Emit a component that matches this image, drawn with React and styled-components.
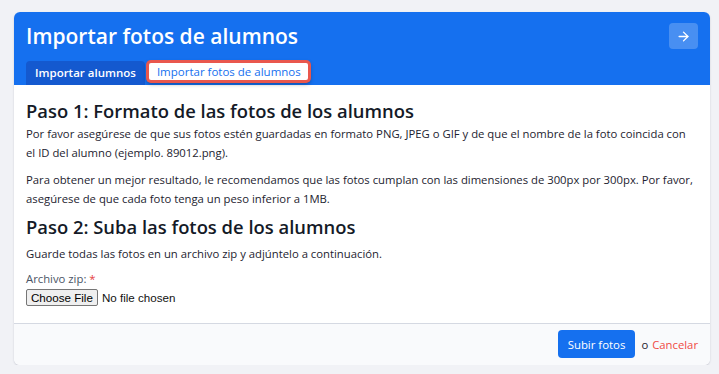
import React from "react";
import styled, { createGlobalStyle } from "styled-components";
import { ArrowRight } from "lucide-react";

const GlobalStyle = createGlobalStyle`
  body {
    margin: 0;
    background: #f1f2f6;
    font-family: "Open Sans", "Liberation Sans", sans-serif;
  }
`;

// non-breaking space keeps "el ID" together, as in the original wrap
const formatText =
  "Por favor asegúrese de que sus fotos estén guardadas en formato PNG, JPEG o GIF y de que el nombre de la foto coincida con el\u00a0ID del alumno (ejemplo. 89012.png).";

function App() {
  return (
    <>
      <GlobalStyle />
      <Page>
        <Card>
          <Header>
            <TitleRow>
              <Title>Importar fotos de alumnos</Title>
              <IconButton>
                <ArrowRight size={15} strokeWidth={2.2} />
              </IconButton>
            </TitleRow>
            <Tabs>
              <Tab>Importar alumnos</Tab>
              <Tab active>Importar fotos de alumnos</Tab>
            </Tabs>
          </Header>

          <Body>
            <Heading>Paso 1: Formato de las fotos de los alumnos</Heading>
            <Text>{formatText}</Text>
            <Text>
              Para obtener un mejor resultado, le recomendamos que las fotos cumplan con las dimensiones de
              300px por 300px. Por favor, asegúrese de que cada foto tenga un peso inferior a 1MB.
            </Text>

            <Heading second>Paso 2: Suba las fotos de los alumnos</Heading>
            <Text>Guarde todas las fotos en un archivo zip y adjúntelo a continuación.</Text>

            <Field>
              <Label>
                Archivo zip: <Required>*</Required>
              </Label>
              <FileInput type="file" accept=".zip" />
            </Field>
          </Body>

          <Footer>
            <SubmitButton>Subir fotos</SubmitButton>
            <Or>o</Or>
            <CancelLink href="#">Cancelar</CancelLink>
          </Footer>
        </Card>
      </Page>
    </>
  );
}

const Page = styled.div`
  padding: 12px 9px 0 14px;
`;

const Card = styled.div`
  background: #fff;
  border-radius: 6px;
  overflow: hidden;
  box-shadow: 0 1px 2px rgba(20, 30, 60, 0.18);
`;

const Header = styled.div`
  background: #1570ef;
  padding: 11px 12px 0 12px;
`;

const TitleRow = styled.div`
  display: flex;
  align-items: center;
  justify-content: space-between;
  height: 26px;
`;

const Title = styled.h1`
  margin: 0;
  color: #fff;
  font-size: 21px;
  font-weight: 600;
  line-height: 26px;
`;

const IconButton = styled.button`
  width: 29px;
  height: 26px;
  border: 0;
  border-radius: 4px;
  background: rgba(255, 255, 255, 0.22);
  color: #fff;
  display: flex;
  align-items: center;
  justify-content: center;
  padding: 0;
`;

const Tabs = styled.div`
  display: flex;
  align-items: flex-start;
  gap: 4px;
  margin-top: 12px;
`;

const Tab = styled.div`
  font-size: 11.5px;
  white-space: nowrap;
  ${(p) =>
    p.active
      ? `
    margin-top: 2px;
    background: #fff;
    color: #1570ef;
    font-weight: 500;
    line-height: 17px;
    padding: 0 7px 0 8px;
    border-radius: 2px;
    box-shadow: 0 0 0 3px #e9574d, 0 2px 4px 2px rgba(0, 0, 0, 0.35);
  `
      : `
    background: #1459cf;
    color: #fff;
    font-weight: 600;
    line-height: 24px;
    padding: 0 9px;
    border-radius: 4px 4px 0 0;
  `}
`;

const Body = styled.div`
  padding: 15px 12px 17px 12px;
  color: #1d2330;
`;

const Heading = styled.h2`
  margin: ${(p) => (p.second ? "7px 0 6px 0" : "0 0 2px 0")};
  font-size: 18.4px;
  font-weight: 600;
  line-height: 22px;
  color: #141a27;
`;

const Text = styled.p`
  margin: 0 0 8px 0;
  font-size: 11.3px;
  line-height: 19px;
`;

const Field = styled.div`
  display: flex;
  flex-direction: column;
  align-items: flex-start;
  gap: 1px;
  margin-top: -2px;
`;

const Label = styled.label`
  font-size: 11.3px;
  line-height: 19px;
  color: #4a5566;
`;

const Required = styled.span`
  color: #e53e3e;
`;

const FileInput = styled.input`
  font-family: "Liberation Sans", Arial, sans-serif;
  font-size: 11.6px;
  color: #111;

  &::file-selector-button {
    font-family: "Liberation Sans", Arial, sans-serif;
    font-size: 11.6px;
    background: #efefef;
    border: 1px solid #767676;
    border-radius: 2px;
    padding: 1px 4px;
    margin-right: 4px;
  }
`;

const Footer = styled.div`
  display: flex;
  justify-content: flex-end;
  align-items: center;
  gap: 6px;
  padding: 6px 12px 7px 12px;
  background: #f9fafc;
  border-top: 1px solid #d5d9e2;
`;

const SubmitButton = styled.button`
  height: 28px;
  padding: 0 10px;
  border: 0;
  border-radius: 4px;
  background: #1570ef;
  color: #fff;
  font-family: "Open Sans", sans-serif;
  font-size: 11.4px;
  font-weight: 500;
`;

const Or = styled.span`
  font-size: 11.3px;
  color: #1d2330;
`;

const CancelLink = styled.a`
  font-size: 11.3px;
  color: #f04a44;
  text-decoration: none;
  margin-left: -2px;
`;

export default App;
